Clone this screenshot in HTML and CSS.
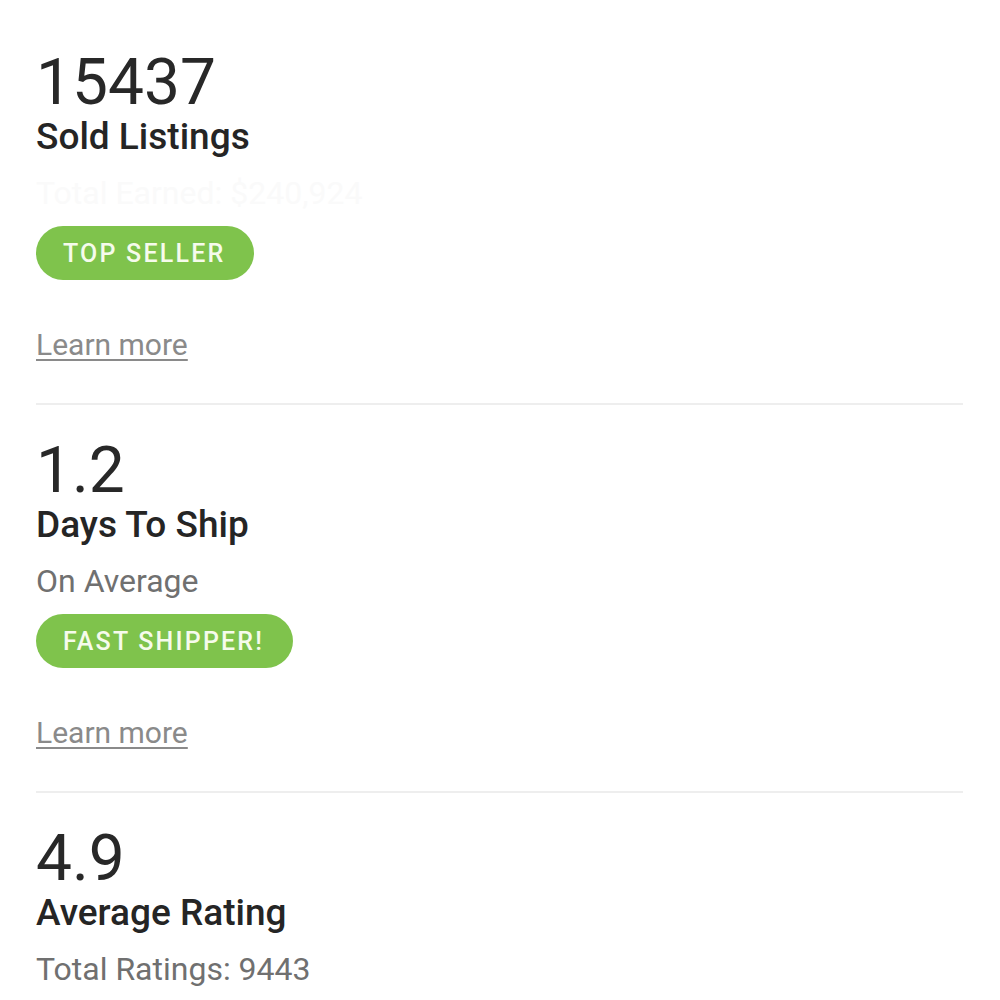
FILE: index.html
```html
<!DOCTYPE html>
<html>
<head>
<meta charset="utf-8">
<link rel="stylesheet" href="styles.css">
</head>
<body>
<main class="stats">
  <section class="stat">
    <div class="value">15437</div>
    <div class="label">Sold Listings</div>
    <div class="sub faded">Total Earned: $240,924</div>
    <span class="badge">TOP SELLER</span>
    <a class="learn" href="#">Learn more</a>
  </section>
  <section class="stat">
    <div class="value">1.2</div>
    <div class="label">Days To Ship</div>
    <div class="sub">On Average</div>
    <span class="badge">FAST SHIPPER!</span>
    <a class="learn" href="#">Learn more</a>
  </section>
  <section class="stat last">
    <div class="value">4.9</div>
    <div class="label">Average Rating</div>
    <div class="sub">Total Ratings: 9443</div>
  </section>
</main>
</body>
</html>
```
FILE: styles.css
```css
html, body {
  margin: 0;
  background: #ffffff;
}
body {
  font-family: Roboto, "Liberation Sans", sans-serif;
}
.stats {
  padding: 17px 37px 0 36px;
  display: flex;
  flex-direction: column;
}
.stat {
  display: flex;
  flex-direction: column;
  align-items: flex-start;
  padding: 34px 0 40px 0;
  border-bottom: 2px solid #eeeeee;
}
.stat.last {
  border-bottom: none;
}
.value {
  font-size: 64px;
  line-height: 64px;
  font-weight: 400;
  color: #282828;
}
.label {
  font-size: 37px;
  line-height: 44px;
  font-weight: 500;
  color: #252525;
}
.sub {
  margin-top: 16px;
  font-size: 32px;
  line-height: 36px;
  color: #707070;
}
.sub.faded {
  color: #fafafa;
}
.badge {
  margin-top: 15px;
  height: 54px;
  display: flex;
  align-items: center;
  padding: 0 29px 0 27px;
  border-radius: 27px;
  background: #7fc34c;
  color: #f6fbec;
  font-size: 25px;
  font-weight: 500;
  letter-spacing: 2.2px;
}
.learn {
  margin-top: 47px;
  font-size: 30px;
  line-height: 36px;
  color: #8a8a8a;
  text-decoration: underline;
  text-decoration-thickness: 2px;
  text-underline-offset: 4px;
}
```
